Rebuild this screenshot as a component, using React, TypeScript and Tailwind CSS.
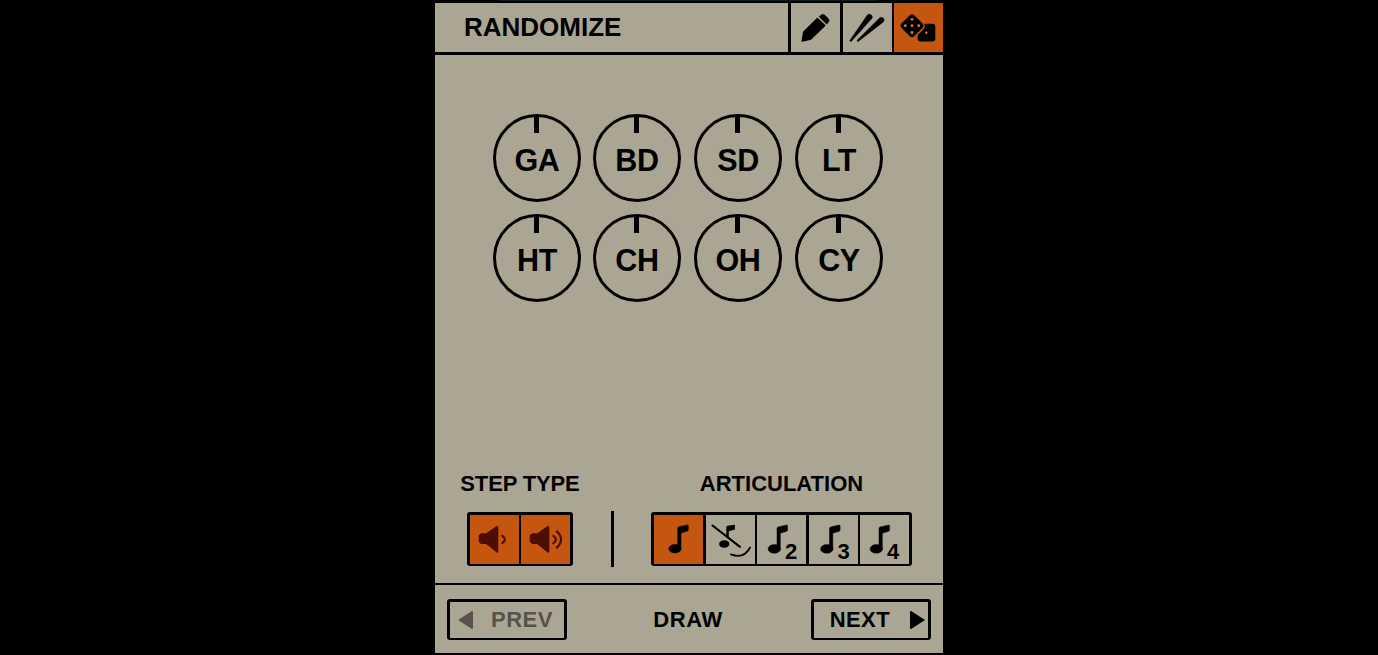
import React from 'react';

const knobs = [
  ['GA', 'BD', 'SD', 'LT'],
  ['HT', 'CH', 'OH', 'CY'],
];

const repeats = [
  { count: '2', shift: -3.7, x: 28 },
  { count: '3', shift: -3.2, x: 28.6 },
  { count: '4', shift: -4.7, x: 27 },
];

const PencilIcon = () => (
  <svg viewBox="0 0 49 49" className="h-[49px] w-[49px]">
    <path d="M11.2 38 L12.6 29.8 Q12.8 29 13.5 28.3 L26.4 15.6 L33.7 22.6 L20.4 35.6 Q19.8 36.2 18.9 36.4 Z" stroke="black" strokeWidth="1.4" strokeLinejoin="round" />
    <path d="M28.3 13.8 L30.2 12.2 Q32 10.8 34 12.4 L37 15.4 Q38.8 17.6 37.3 19.3 L35.6 20.9 Z" stroke="black" strokeWidth="0.8" strokeLinejoin="round" />
  </svg>
);

const SticksIcon = () => (
  <svg viewBox="0 0 49 49" className="h-[49px] w-[49px]">
    <path d="M6.8 37.4 L24 12.5 A2.7 2.7 0 0 1 28.8 15.6 L8.4 38.3 Q6.8 39 6.8 37.4 Z" stroke="black" strokeWidth="0.4" />
    <path d="M14.1 37.2 L36.8 14.7 A2.8 2.8 0 0 1 40.4 18.9 L15.2 38.5 Q13.7 38.7 14.1 37.2 Z" stroke="black" strokeWidth="0.4" />
  </svg>
);

const DiceIcon = () => (
  <svg viewBox="0 0 49 49" className="h-[49px] w-[49px]">
    <rect x="23.6" y="20.8" width="17.7" height="17.8" rx="3" />
    <rect x="8.6" y="13.3" width="18.8" height="18.8" rx="4" transform="rotate(45 18 22.7)" stroke="#c5560f" strokeWidth="2.4" />
    <rect x="9" y="13.7" width="18" height="18" rx="3.4" transform="rotate(45 18 22.7)" />
    <g fill="#dd7a36">
      <circle cx="18" cy="16.3" r="1.4" />
      <circle cx="11.4" cy="22.7" r="1.4" />
      <circle cx="18" cy="22.7" r="1.4" />
      <circle cx="24.7" cy="22.7" r="1.4" />
      <circle cx="18" cy="29.5" r="1.4" />
      <circle cx="32.3" cy="29.7" r="1.2" />
    </g>
  </svg>
);

const SpeakerIcon = ({ loud = false }: { loud?: boolean }) => (
  <svg viewBox="0 0 49 49" className="h-[49px] w-[49px] shrink-0 text-[#4d0d00]">
    <path
      d="M11 18.3 H16.2 L26.6 10.9 Q28.3 10.3 28.3 12 V36.6 Q28.3 38.3 26.6 37.6 L16.2 29 H11 L8.7 26.8 V20.5 Z"
      fill="currentColor"
    />
    <g fill="none" stroke="currentColor" strokeWidth="2.2" strokeLinecap="round">
      <path d="M32.3 20.8 Q37.6 24.4 32.3 28.1" />
      {loud && <path d="M35.8 16.4 Q44.3 24.3 35.8 32.6" />}
    </g>
  </svg>
);

const NoteShape = () => (
  <g stroke="black" strokeWidth="0.5">
    <ellipse cx="21" cy="33.7" rx="6.2" ry="4.3" />
    <path d="M23.7 34 V13.3 Q23.7 12 25 11.7 L33.3 9.9 Q34.3 9.8 34.3 10.8 V14.8 Q34.3 15.8 33.3 16.1 L27 18 V34 Z" />
  </g>
);

const NoteIcon = () => (
  <svg viewBox="0 0 49 49" className="h-[49px] w-[49px] shrink-0">
    <NoteShape />
  </svg>
);

const FlamIcon = () => (
  <svg viewBox="0 0 49 49" className="h-[49px] w-[49px] shrink-0">
    <ellipse cx="18.2" cy="29" rx="5.1" ry="3.8" />
    <path d="M20.3 22 V12.3 Q20.3 11 21.5 10.8 L28.9 9.8 V14.6 L22.8 16.3 V24 Z" />
    <g fill="none" stroke="black" strokeLinecap="round">
      <path d="M6.5 10.5 L34 31.9" strokeWidth="2.1" />
      <path d="M24.9 39.4 Q37.5 44.6 44.1 32.5" strokeWidth="1.7" />
    </g>
  </svg>
);

const RepeatIcon = ({ count, shift, x }: { count: string; shift: number; x: number }) => (
  <svg viewBox="0 0 49 49" className="h-[49px] w-[49px] shrink-0">
    <g transform={`translate(${shift} 0.2)`}>
      <NoteShape />
    </g>
    <text x={x} y="44" fontSize="22" fontWeight="bold">{count}</text>
  </svg>
);

const Knob = ({ label }: { label: string }) => (
  <div className="h-[88px] w-[88px] rounded-full border-3 border-black">
    <div className="ml-[38px] h-4 w-[5px] bg-black" />
    <div className="mt-[10px] text-center text-[30.5px] leading-[34px] font-bold tracking-[-0.4px]">{label}</div>
  </div>
);

const App = () => {
  return (
    <div className="flex h-[655px] w-full flex-col items-center overflow-hidden bg-black font-['Liberation_Sans',Arial,sans-serif] font-bold text-black">
      <div className="mr-[2px] mb-[2px] h-px w-[378px] shrink-0 bg-[#12191b]" />

      <div className="flex h-[650px] w-[508px] flex-col">
        <header className="mb-[3px] flex h-[49px]">
          <div className="mr-[3px] w-[353px] bg-[#aba693] pl-[29px]">
            <h1 className="pt-[9px] text-[26px] leading-[30px]">RANDOMIZE</h1>
          </div>
          <button className="mr-[3px] w-[49px] bg-[#aba693]">
            <PencilIcon />
          </button>
          <button className="mr-[2px] w-[49px] bg-[#aba693]">
            <SticksIcon />
          </button>
          <button className="w-[49px] bg-[#c5560f]">
            <DiceIcon />
          </button>
        </header>

        <main className="mb-[2px] flex h-[528px] flex-col justify-between bg-[#aba693] pt-[59px] pb-4">
          <div className="flex flex-col gap-3 pl-[58px]">
            {knobs.map((row, i) => (
              <div key={i} className="grid grid-cols-[100px_101px_101px_88px]">
                {row.map((label) => (
                  <Knob key={label} label={label} />
                ))}
              </div>
            ))}
          </div>

          <div className="flex items-end pl-[25px]">
            <section className="flex w-[120px] flex-col items-center">
              <h2 className="mb-4 text-[22px] leading-6 tracking-[-0.15px] whitespace-nowrap">STEP TYPE</h2>
              <div className="mb-px flex h-[54px] w-[106px] gap-[2.5px] rounded-[3px] border-3 border-b-2 border-black bg-black">
                <button className="flex-1 overflow-hidden bg-[#c5560f]">
                  <SpeakerIcon />
                </button>
                <button className="flex-1 overflow-hidden bg-[#c5560f]">
                  <SpeakerIcon loud />
                </button>
              </div>
            </section>

            <div className="ml-[31px] h-14 w-[3px] bg-black" />

            <section className="ml-[37px] flex w-[261px] flex-col items-center">
              <h2 className="mb-4 text-[22px] leading-6 whitespace-nowrap">ARTICULATION</h2>
              <div className="mb-px flex h-[54px] w-full gap-[2.5px] rounded-[3px] border-3 border-b-2 border-black bg-black">
                <button className="flex-1 bg-[#c5560f]">
                  <NoteIcon />
                </button>
                <button className="flex-1 bg-[#aba693]">
                  <FlamIcon />
                </button>
                {repeats.map((item) => (
                  <button key={item.count} className="flex-1 bg-[#aba693]">
                    <RepeatIcon {...item} />
                  </button>
                ))}
              </div>
            </section>
          </div>
        </main>

        <footer className="flex h-[68px] items-start justify-between bg-[#aba693] px-3 pt-[14px] text-[22px] leading-6">
          <button className="flex h-[41px] w-[120px] items-center rounded-[3px] border-3 border-b-2 border-black pl-2 text-[#55534a]">
            <svg viewBox="0 0 15 18" className="h-[18px] w-[15px]" fill="currentColor">
              <path d="M0 9 L14 0 Q15 0 15 1 V17 Q15 18 14 18 Z" />
            </svg>
            <span className="ml-[18px] tracking-[0.5px]">PREV</span>
          </button>
          <span className="pt-[9px] pr-[2px] tracking-[0.6px]">DRAW</span>
          <button className="flex h-[41px] w-[120px] items-center justify-end rounded-[3px] border-3 border-b-2 border-black pr-[3px]">
            <span className="mr-5 tracking-[0.4px]">NEXT</span>
            <svg viewBox="0 0 15 18" className="h-[18px] w-[15px]">
              <path d="M15 9 L1 0 Q0 0 0 1 V17 Q0 18 1 18 Z" />
            </svg>
          </button>
        </footer>
      </div>
    </div>
  );
};

export default App;
